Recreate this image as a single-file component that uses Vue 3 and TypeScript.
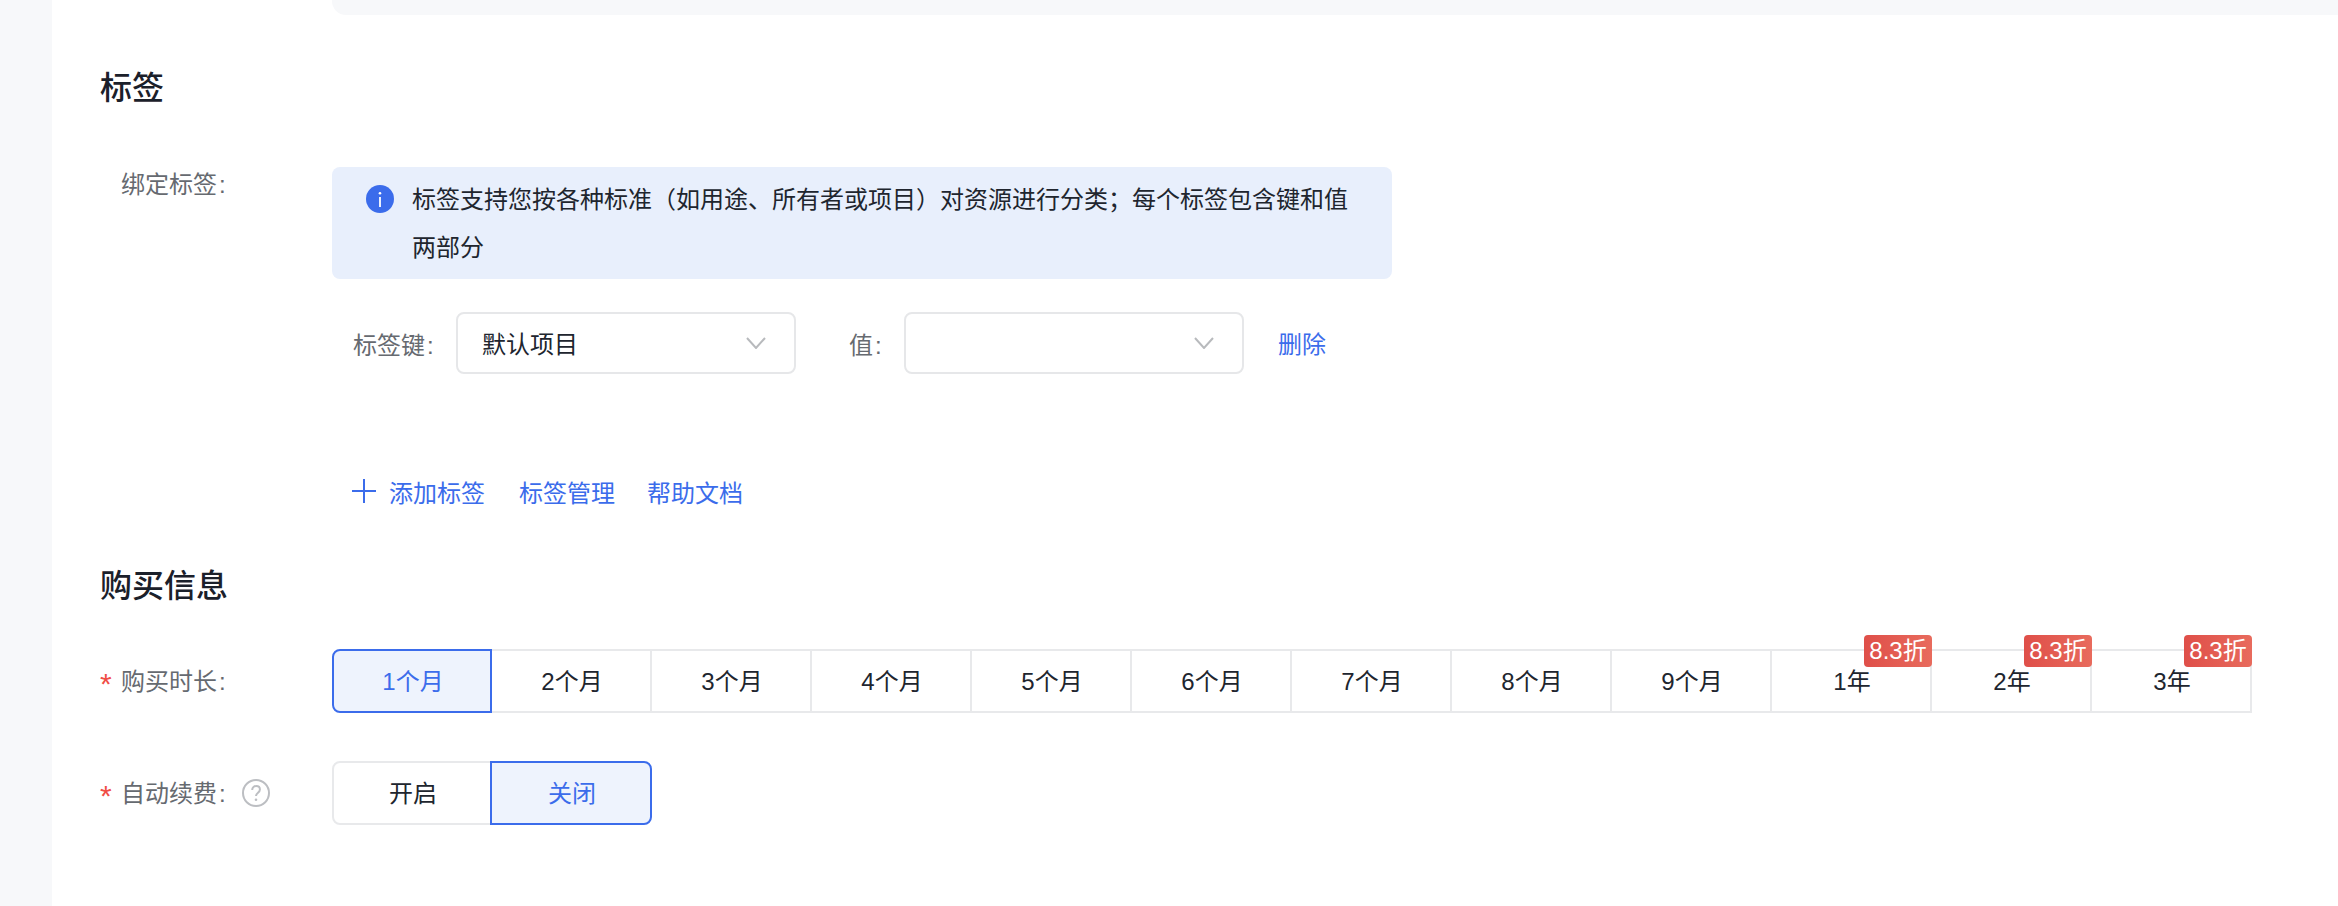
<script setup lang="ts">
interface Duration {
  label: string
  discount?: string
}

const durations: Duration[] = [
  { label: '1个月' },
  { label: '2个月' },
  { label: '3个月' },
  { label: '4个月' },
  { label: '5个月' },
  { label: '6个月' },
  { label: '7个月' },
  { label: '8个月' },
  { label: '9个月' },
  { label: '1年', discount: '8.3折' },
  { label: '2年', discount: '8.3折' },
  { label: '3年', discount: '8.3折' }
]
</script>

<template>
  <div class="page">
    <aside class="rail"></aside>
    <main class="main">
      <div class="top-box"></div>

      <h2 class="heading first-heading">标签</h2>

      <div class="form-row alert-row">
        <div class="label"><span class="label-text">绑定标签<span class="colon">:</span></span></div>
        <div class="content">
          <div class="alert">
            <svg class="info-icon" viewBox="0 0 28 28" aria-hidden="true">
              <circle cx="14" cy="14" r="14" fill="#3b6ceb" />
              <circle cx="14" cy="8.2" r="1.3" fill="#fff" />
              <path d="M14 12v10" stroke="#fff" stroke-width="1.8" />
            </svg>
            <p class="alert-text">标签支持您按各种标准（如用途、所有者或项目）对资源进行分类；每个标签包含键和值两部分</p>
          </div>
        </div>
      </div>

      <div class="tag-row">
        <span class="tag-label key-label">标签键<span class="colon">:</span></span>
        <div class="select">
          <span class="select-value">默认项目</span>
          <svg class="chevron" viewBox="0 0 20 12" aria-hidden="true">
            <path d="M1 1l9 10 9-10" fill="none" stroke="#b8babd" stroke-width="2" />
          </svg>
        </div>
        <span class="tag-label value-label">值<span class="colon">:</span></span>
        <div class="select">
          <span class="select-value"></span>
          <svg class="chevron" viewBox="0 0 20 12" aria-hidden="true">
            <path d="M1 1l9 10 9-10" fill="none" stroke="#b8babd" stroke-width="2" />
          </svg>
        </div>
        <a class="link delete-link">删除</a>
      </div>

      <div class="add-row">
        <svg class="plus" viewBox="0 0 24 24" aria-hidden="true">
          <path d="M0 12h24M12 0v24" stroke="#3b6ceb" stroke-width="2" />
        </svg>
        <a class="link add-link">添加标签</a>
        <a class="link manage-link">标签管理</a>
        <a class="link help-link">帮助文档</a>
      </div>

      <h2 class="heading second-heading">购买信息</h2>

      <div class="form-row duration-row">
        <div class="label centered"><span class="star">*</span><span class="label-text">购买时长<span class="colon">:</span></span></div>
        <div class="segments">
          <button
            v-for="(item, index) in durations"
            :key="item.label"
            type="button"
            class="segment"
            :class="{ active: index === 0 }"
          >
            {{ item.label }}
            <span v-if="item.discount" class="badge">{{ item.discount }}</span>
          </button>
        </div>
      </div>

      <div class="form-row renew-row">
        <div class="label centered">
          <span class="star">*</span><span class="label-text">自动续费<span class="colon">:</span></span>
          <svg class="help-icon" viewBox="0 0 28 28" aria-hidden="true">
            <circle cx="14" cy="14" r="13" fill="none" stroke="#bcbec2" stroke-width="2" />
            <path d="M10.2 11c0-2.4 1.7-3.9 3.9-3.9s3.8 1.4 3.8 3.4c0 3.2-3.9 3.2-3.9 6.6" fill="none" stroke="#bcbec2" stroke-width="2" />
            <circle cx="14" cy="20.8" r="1.3" fill="#bcbec2" />
          </svg>
        </div>
        <div class="segments toggle">
          <button type="button" class="segment">开启</button>
          <button type="button" class="segment active">关闭</button>
        </div>
      </div>
    </main>
  </div>
</template>

<style>
html,
body {
  margin: 0;
  background: #fff;
}
</style>

<style scoped>
.page {
  display: flex;
  width: 2338px;
  height: 906px;
  overflow: hidden;
  background: #fff;
  color: #20252e;
  font-family: "Liberation Sans", "Noto Sans CJK SC", sans-serif;
  font-size: 24px;
}

.rail {
  flex: 0 0 52px;
  background: #f7f8fa;
}

.main {
  flex: 1;
  min-width: 0;
  padding-left: 49px;
}

.top-box {
  height: 15px;
  margin-left: 231px;
  border-radius: 0 0 0 14px;
  background: #f7f8fa;
}

.heading {
  margin: 0 0 0 -1px;
  font-size: 32px;
  font-weight: 500;
  line-height: 44px;
  color: #1b202a;
}

.first-heading {
  margin-top: 51px;
}

.second-heading {
  margin-top: 49px;
}

.form-row {
  display: flex;
}

.alert-row {
  margin-top: 57px;
}

.duration-row {
  margin-top: 41px;
}

.renew-row {
  margin-top: 48px;
}

.label {
  display: flex;
  flex: 0 0 231px;
  color: #666a70;
  line-height: 32px;
}

.label.centered {
  align-items: center;
}

.label-text {
  padding-top: 2px;
}

.colon {
  margin-left: 2px;
}

.alert-row .label {
  padding-left: 20px;
  box-sizing: border-box;
}

.star {
  width: 20px;
  margin-right: 1px;
  margin-left: -1px;
  padding-top: 5px;
  color: #f04d47;
  font-size: 30px;
  line-height: 32px;
}

.content {
  width: 1060px;
}

.alert {
  display: flex;
  box-sizing: border-box;
  height: 112px;
  padding: 8px 32px 8px 34px;
  border-radius: 8px;
  background: #e8effc;
}

.info-icon {
  flex: 0 0 28px;
  width: 28px;
  height: 28px;
  margin: 10px 18px 0 0;
}

.alert-text {
  margin: 0;
  padding-top: 1px;
  line-height: 48px;
  color: #20252e;
}

.tag-row {
  display: flex;
  align-items: center;
  height: 62px;
  margin: 33px 0 0 252px;
}

.tag-label {
  color: #666a70;
  white-space: nowrap;
}

.key-label {
  width: 103px;
}

.value-label {
  width: 55px;
  margin-left: 53px;
}

.select {
  display: flex;
  align-items: center;
  justify-content: space-between;
  box-sizing: border-box;
  width: 340px;
  height: 62px;
  padding: 0 28px 0 24px;
  border: 2px solid #e6e7e9;
  border-radius: 8px;
}

.select-value {
  padding-bottom: 2px;
}

.chevron {
  width: 20px;
  height: 12px;
}

.link {
  color: #3b6ceb;
  white-space: nowrap;
  cursor: pointer;
}

.delete-link {
  margin-left: 34px;
  padding-bottom: 2px;
}

.add-row {
  display: flex;
  align-items: center;
  height: 48px;
  margin: 93px 0 0 251px;
}

.plus {
  width: 24px;
  height: 24px;
}

.add-link {
  margin-left: 13px;
}

.manage-link {
  margin-left: 34px;
}

.help-link {
  margin-left: 32px;
}

.segments {
  display: flex;
}

.segment {
  position: relative;
  flex: 0 0 162px;
  box-sizing: border-box;
  height: 64px;
  margin-left: -2px;
  padding: 0 0 0 2px;
  border: 2px solid #e8e9eb;
  background: #fff;
  color: #20252e;
  font: inherit;
  line-height: 62px;
}

.segment:first-child {
  flex-basis: 160px;
  margin-left: 0;
  border-radius: 8px 0 0 8px;
}

.toggle .segment:last-child {
  border-radius: 0 8px 8px 0;
}

.segment.active {
  z-index: 1;
  border-color: #3b6ceb;
  background: #eef3fd;
  color: #3b6ceb;
}

.badge {
  position: absolute;
  top: -16px;
  right: -2px;
  z-index: 2;
  width: 68px;
  height: 32px;
  border-radius: 4px;
  background: linear-gradient(90deg, #df4f49, #e86b5d);
  color: #fff;
  line-height: 32px;
  text-align: center;
}

.help-icon {
  flex: 0 0 28px;
  width: 28px;
  height: 28px;
  margin-left: 16px;
}
</style>
